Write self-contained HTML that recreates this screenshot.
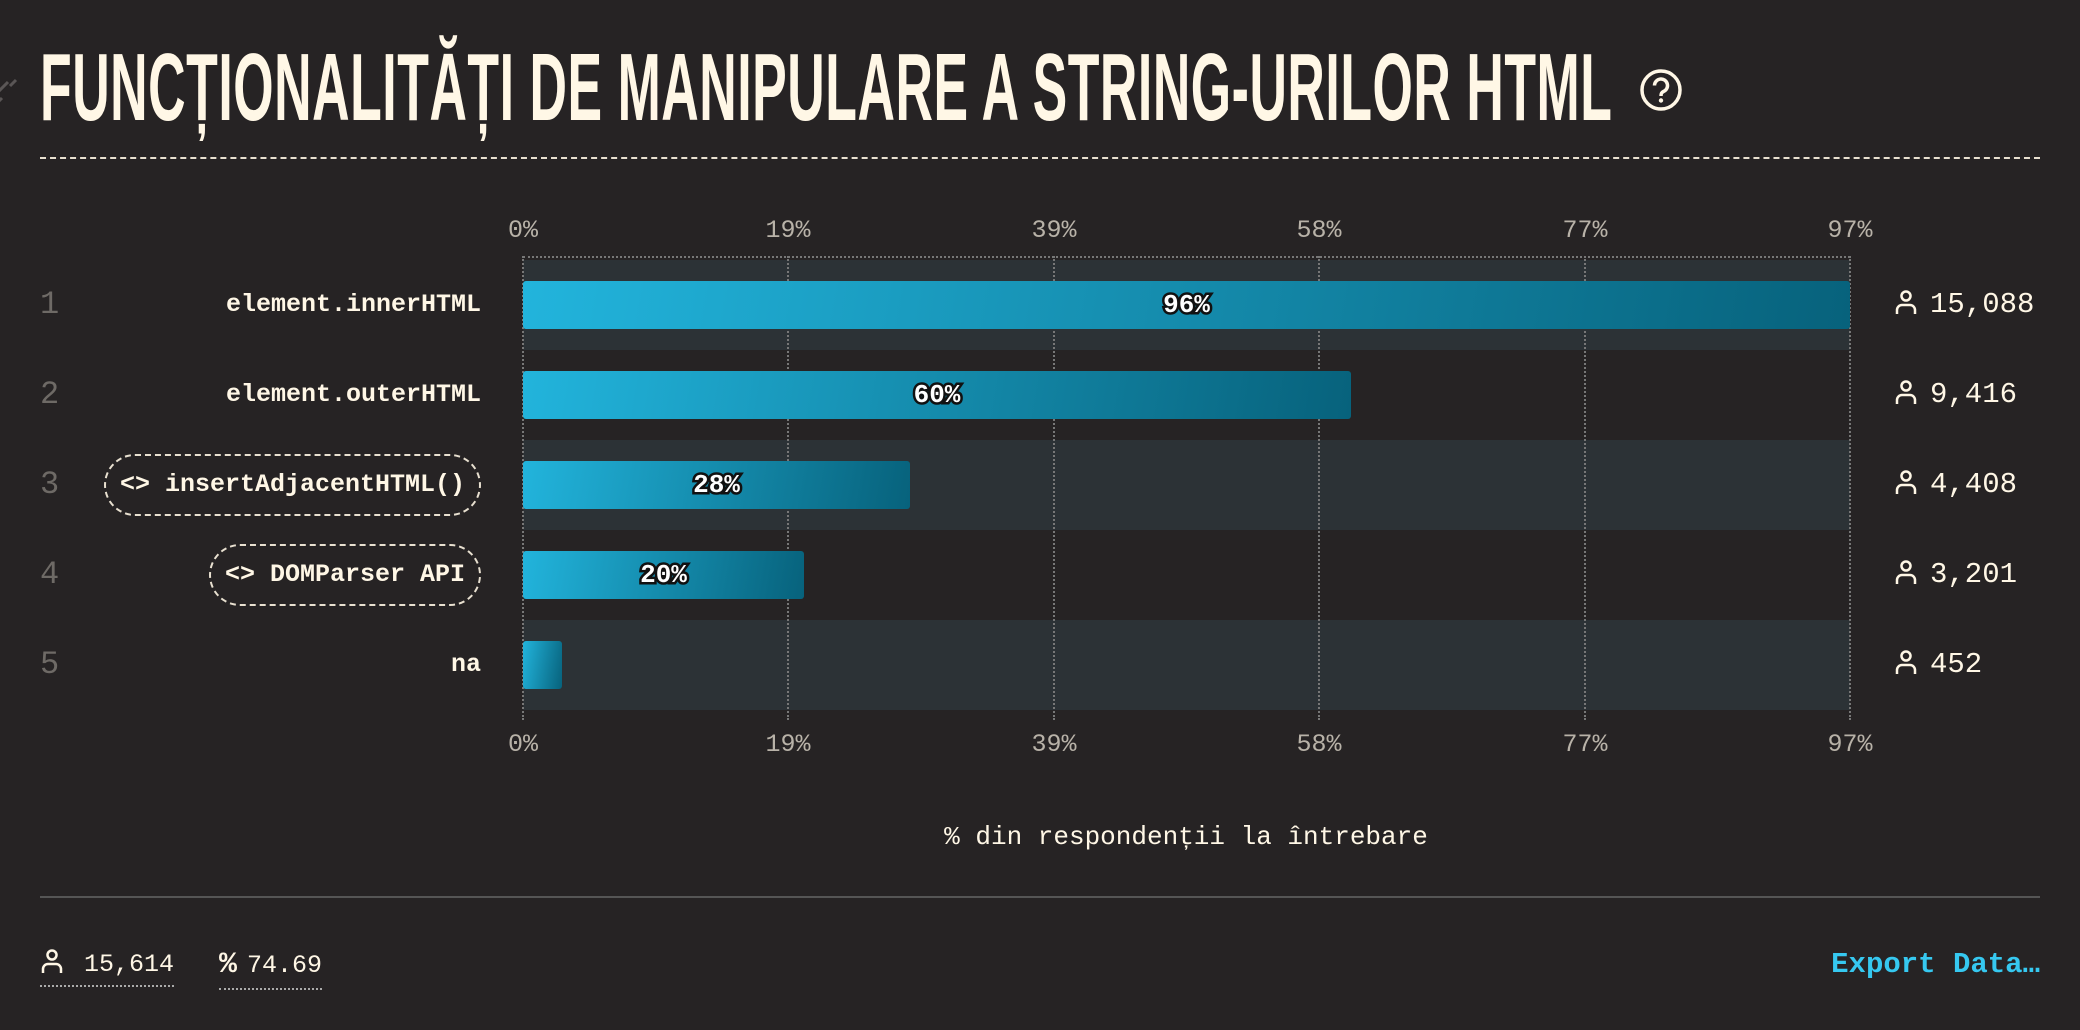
<!DOCTYPE html>
<html><head><meta charset="utf-8"><style>
*{margin:0;padding:0;box-sizing:border-box}
body{width:2080px;height:1030px;background:#262324;color:#fff7e6;font-family:"Liberation Mono",monospace;position:relative;overflow:hidden}
.abs{position:absolute}
.title{left:40px;top:40px;font-family:"Liberation Sans",sans-serif;font-weight:bold;font-size:96px;line-height:96px;white-space:nowrap;transform:scaleX(0.54);transform-origin:left top;color:#fff7e6;letter-spacing:1px}
.dash{left:40px;top:157px;width:2000px;border-top:2px dashed #e8e0d0}
.tick{font-size:25px;color:#b8b2a8;width:100px;text-align:center}
.band{left:523px;width:1327px;height:90px;background:#2c3236}
.vline{top:256px;height:464px;border-left:2px dotted #777}
.hline{left:523px;top:256px;width:1327px;border-top:2px dotted #777}
.bar{left:523px;height:48px;border-radius:3px;background:linear-gradient(100deg,#22b4dc,#07627c)}
.pct{font-weight:bold;font-size:26px;color:#fff;text-align:center;line-height:48px;-webkit-text-stroke:5px #111;paint-order:stroke fill}
.num{left:40px;font-size:32px;color:#6e6a66;line-height:90px}
.lab{right:1599px;font-weight:bold;font-size:25px;line-height:90px;text-align:right;white-space:nowrap}
.pill{border:2px dashed #e8e0d0;border-radius:32px;padding:0 14px;height:62px;line-height:58px;display:inline-block}
.cnt{left:1894px;font-size:29px;line-height:90px;white-space:nowrap}
.cnt svg{vertical-align:-3px;margin-right:12px}
</style></head><body>
<svg class="abs" style="left:0;top:72px" width="18" height="36" viewBox="0 0 18 36"><path d="M-4 22 L8 10 M2 26 l-6 6 M10 14 l6-6" stroke="#5a5656" stroke-width="3" fill="none"/></svg>
<div class="abs title">FUNCȚIONALITĂȚI DE MANIPULARE A STRING-URILOR HTML</div>
<svg class="abs" style="left:1639px;top:68px" width="44" height="44" viewBox="0 0 44 44"><circle cx="22" cy="22" r="19" stroke="#fff7e6" stroke-width="3.5" fill="none"/><path d="M15.5 17.5a6.5 6.5 0 1 1 9 6c-2 1-2.5 2-2.5 4.5" stroke="#fff7e6" stroke-width="3.5" fill="none"/><circle cx="22" cy="32.5" r="2.2" fill="#fff7e6"/></svg>
<div class="abs dash"></div>

<div class="abs band" style="top:260px"></div>
<div class="abs band" style="top:440px"></div>
<div class="abs band" style="top:620px"></div>
<div class="abs hline"></div>
<div class="abs vline" style="left:522px"></div>
<div class="abs vline" style="left:787px"></div>
<div class="abs vline" style="left:1053px"></div>
<div class="abs vline" style="left:1318px"></div>
<div class="abs vline" style="left:1584px"></div>
<div class="abs vline" style="left:1849px"></div>

<div class="abs tick" style="left:473px;top:216px">0%</div>
<div class="abs tick" style="left:738px;top:216px">19%</div>
<div class="abs tick" style="left:1004px;top:216px">39%</div>
<div class="abs tick" style="left:1269px;top:216px">58%</div>
<div class="abs tick" style="left:1535px;top:216px">77%</div>
<div class="abs tick" style="left:1800px;top:216px">97%</div>
<div class="abs tick" style="left:473px;top:730px">0%</div>
<div class="abs tick" style="left:738px;top:730px">19%</div>
<div class="abs tick" style="left:1004px;top:730px">39%</div>
<div class="abs tick" style="left:1269px;top:730px">58%</div>
<div class="abs tick" style="left:1535px;top:730px">77%</div>
<div class="abs tick" style="left:1800px;top:730px">97%</div>

<div class="abs bar pct" style="top:281px;width:1327px">96%</div>
<div class="abs bar pct" style="top:371px;width:828px">60%</div>
<div class="abs bar pct" style="top:461px;width:387px">28%</div>
<div class="abs bar pct" style="top:551px;width:281px">20%</div>
<div class="abs bar" style="top:641px;width:39px"></div>

<div class="abs num" style="top:260px">1</div>
<div class="abs num" style="top:350px">2</div>
<div class="abs num" style="top:440px">3</div>
<div class="abs num" style="top:530px">4</div>
<div class="abs num" style="top:620px">5</div>

<div class="abs lab" style="top:260px">element.innerHTML</div>
<div class="abs lab" style="top:350px">element.outerHTML</div>
<div class="abs lab" style="top:440px"><span class="pill">&lt;&gt; insertAdjacentHTML()</span></div>
<div class="abs lab" style="top:530px"><span class="pill">&lt;&gt; DOMParser API</span></div>
<div class="abs lab" style="top:620px">na</div>

<svg width="0" height="0" style="position:absolute"><defs><symbol id="u" viewBox="0 0 24 26"><circle cx="12" cy="7" r="4.5" stroke="#fff7e6" stroke-width="2.5" fill="none"/><path d="M3 25v-4a5 5 0 0 1 5-5h8a5 5 0 0 1 5 5v4" stroke="#fff7e6" stroke-width="2.5" fill="none"/></symbol></defs></svg>
<div class="abs cnt" style="top:260px"><svg width="24" height="26"><use href="#u"/></svg>15,088</div>
<div class="abs cnt" style="top:350px"><svg width="24" height="26"><use href="#u"/></svg>9,416</div>
<div class="abs cnt" style="top:440px"><svg width="24" height="26"><use href="#u"/></svg>4,408</div>
<div class="abs cnt" style="top:530px"><svg width="24" height="26"><use href="#u"/></svg>3,201</div>
<div class="abs cnt" style="top:620px"><svg width="24" height="26"><use href="#u"/></svg>452</div>

<div class="abs" style="left:786px;top:822px;width:800px;text-align:center;font-size:26px">% din respondenții la întrebare</div>
<div class="abs" style="left:40px;top:896px;width:2000px;border-top:2px solid #555"></div>

<div class="abs" style="left:40px;top:948px;font-size:25px;white-space:nowrap;border-bottom:2px dotted #aaa;padding-bottom:6px"><svg width="24" height="26" style="vertical-align:-3px;margin-right:20px"><use href="#u"/></svg>15,614</div>
<div class="abs" style="left:219px;top:948px;font-size:25px;white-space:nowrap;border-bottom:2px dotted #aaa;padding-bottom:6px"><span style="font-size:30px;font-weight:bold;margin-right:10px">%</span>74.69</div>
<div class="abs" style="right:40px;top:948px;font-size:29px;font-weight:bold;color:#36c8f0;white-space:nowrap">Export Data…</div>
</body></html>
